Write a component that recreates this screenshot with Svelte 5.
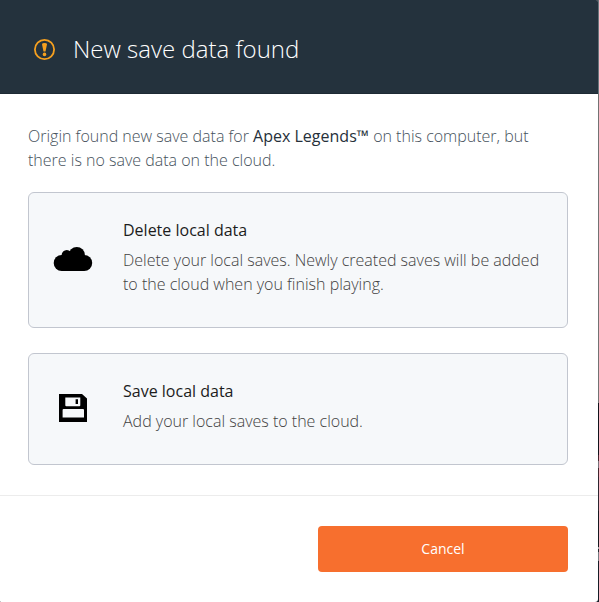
<script>
  const options = [
    { id: 'delete', title: 'Delete local data', lines: ['Delete your local saves. Newly created saves will be added', 'to the cloud when you finish playing.'] },
    { id: 'save', title: 'Save local data', lines: ['Add your local saves to the cloud.'] }
  ];
</script>

<div class="backdrop">
  <section class="dialog" role="dialog" aria-labelledby="title">
    <header>
      <svg class="alert" width="22" height="22" viewBox="0 0 22 22" aria-hidden="true">
        <circle cx="10.5" cy="10.5" r="9.6" fill="none" stroke="#f6a01f" stroke-width="1.8" />
        <path d="M8 5.300Q8 3.900 10.500 3.900T13 5.300L11.500 12.600H9.500Z" fill="#f6a01f" />
        <circle cx="10.5" cy="15.4" r="1.8" fill="#f6a01f" />
      </svg>
      <h1 id="title">New save data found</h1>
    </header>

    <main>
      <p class="intro">
        <span>Origin found new save data for <strong>Apex Legends™</strong> on this computer, but</span><br />
        <span>there is no save data on the cloud.</span>
      </p>
      {#each options as option}
        <button class="option {option.id}">
          <span class="icon">
            {#if option.id === 'delete'}
              <svg width="40" height="26" viewBox="0 0 40 26" aria-hidden="true">
                <circle cx="8.7" cy="17" r="8" />
                <circle cx="13.8" cy="9.300" r="5.200" />
                <circle cx="23.8" cy="9.100" r="8.100" />
                <circle cx="31.2" cy="17" r="8" />
                <path d="M8.700 9.500H31.200V25H8.700Z" />
              </svg>
            {:else}
              <svg width="28" height="28" viewBox="0 0 28 28" aria-hidden="true">
                <path fill-rule="evenodd" d="M0 0H23L28 4.500V28H0ZM6.300 3.500V11.300Q6.300 12.300 7.300 12.300H20.300Q21.300 12.300 21.300 11.300V3.500ZM16.600 5.300H19V10H16.600ZM4.600 15Q3.600 15 3.600 16V23.600H25V16Q25 15 24 15Z" />
              </svg>
            {/if}
          </span>
          <span class="copy">
            <span class="name">{option.title}</span>
            {#each option.lines as line}<span class="line">{line}</span>{/each}
          </span>
        </button>
      {/each}
    </main>

    <footer><button class="cancel">Cancel</button></footer>
  </section>
  <span class="edge"></span>
</div>

<style>
  :global(body) { margin: 0; }
  * { box-sizing: border-box; }
  .backdrop {
    display: flex;
    width: 599px;
    height: 602px;
    overflow: hidden;
    background: #151b23;
    font-family: "Open Sans", sans-serif;
    font-weight: 300;
  }
  .dialog {
    display: flex;
    flex-direction: column;
    width: 598px;
    height: 602px;
    background: #fff;
    border-radius: 0 2px 3px 1px;
    overflow: hidden;
  }
  .edge {
    width: 1px;
    background: linear-gradient(#68747b 0 94px, #737373 94px 403px, #11131c 403px 455px, #45232e 455px 461px, #77717a 461px 468px, #40252d 468px 477px, #2c2630 477px 511px, #15181f 511px 547px, #a0a1a4 547px 549px, #20262e 549px 552px, #777b81 552px 561px, #151d27 561px);
  }
  header {
    display: flex;
    align-items: center;
    height: 94px;
    padding: 0 34px 0 34px;
    background: #24323d;
    border-bottom: 1px solid #1e2a34;
  }
  .alert { margin-top: 6px; }
  h1 {
    margin: 5px 0 0 17px;
    color: #fff;
    font-size: 24px;
    line-height: 32px;
    font-weight: 300;
    white-space: nowrap;
  }
  main { flex: none; height: 401px; padding: 30px 30px 0 28px; }
  .intro { margin: 0 0 20px; color: #46525c; font-size: 16px; line-height: 24px; white-space: nowrap; }
  strong { color: #26303a; font-weight: 400; }
  .option {
    display: flex;
    align-items: center;
    width: 540px;
    height: 136px;
    margin: 0 0 25px;
    padding: 0;
    border: 1px solid #c2c6cf;
    border-radius: 6px;
    background: #f6f8fa;
    font: inherit;
    text-align: left;
  }
  .option.save { height: 112px; }
  .icon { display: flex; justify-content: center; width: 88px; margin-top: -2px; }
  svg { display: block; flex: none; }
  .copy { display: flex; flex-direction: column; margin: -7px 0 0 6px; white-space: nowrap; }
  .name { margin-bottom: 6px; color: #1c1c1c; font-size: 16px; line-height: 24px; font-weight: 400; }
  .line { color: #424242; font-size: 16px; line-height: 24px; }
  footer {
    display: flex;
    justify-content: flex-end;
    flex: 1;
    padding: 30px 30px 0;
    border-top: 1px solid #ececec;
  }
  .cancel {
    width: 250px;
    height: 46px;
    padding: 0;
    border: 0;
    border-radius: 4px;
    background: #f76f2e;
    color: #fff;
    font: 400 14px/20px "Open Sans", sans-serif;
  }
</style>
